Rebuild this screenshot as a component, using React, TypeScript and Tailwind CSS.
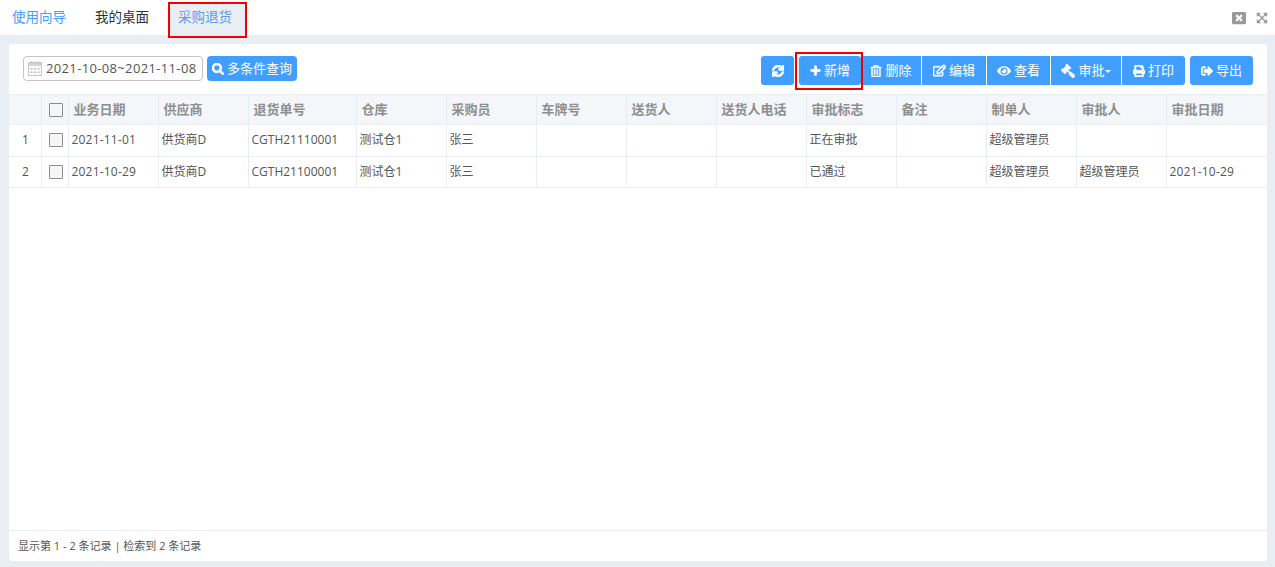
import React from "react";
import { FaSync, FaPlus, FaRegTrashAlt, FaRegEdit, FaEye, FaGavel, FaPrint, FaSignOutAlt, FaSearch, FaWindowClose, FaExpandArrowsAlt } from "react-icons/fa";

const widths = [32, 27, 90, 90, 108, 90, 90, 90, 90, 90, 90, 90, 90, 90, 101];
const heads = ["业务日期", "供应商", "退货单号", "仓库", "采购员", "车牌号", "送货人", "送货人电话", "审批标志", "备注", "制单人", "审批人", "审批日期"];
const rows = [
  ["1", "2021-11-01", "供货商D", "CGTH21110001", "测试仓1", "张三", "", "", "", "正在审批", "", "超级管理员", "", ""],
  ["2", "2021-10-29", "供货商D", "CGTH21100001", "测试仓1", "张三", "", "", "", "已通过", "", "超级管理员", "超级管理员", "2021-10-29"],
];

function Check() {
  return <span className="block w-[14px] h-[14px] border border-[#8a8a8a] bg-[#f5f5f5] ml-[7px] rounded-[1px]" />;
}

function CalendarIcon() {
  return (
    <svg width="16" height="17" viewBox="0 0 16 17" className="shrink-0" fill="none" stroke="#c8c8c8" strokeWidth="1">
      <rect x="1.5" y="2.5" width="13" height="13" fill="#fafafa" />
      <rect x="2" y="3" width="12" height="3" fill="#d4d4d4" stroke="none" />
      <path d="M4.5 1v3M8 1v3M11.5 1v3" />
      <path d="M3.5 8h2v1.5h-2zM7 8h2v1.5H7zM10.5 8h2v1.5h-2zM3.5 11.5h2V13h-2zM7 11.5h2V13H7zM10.5 11.5h2V13h-2z" fill="#bdbdbd" stroke="none" />
    </svg>
  );
}

function Btn({ icon, label, caret, className = "" }: { icon: React.ReactNode; label?: string; caret?: boolean; className?: string }) {
  return (
    <div className={`h-[29px] bg-[#409eff] text-white text-[13px] flex items-center justify-center gap-[3px] ${className}`}>
      {icon}
      {label && <span>{label}</span>}
      {caret && <span className="-ml-[3px] mt-[2px] w-0 h-0 border-x-[3px] border-x-transparent border-t-[3px] border-t-white" />}
    </div>
  );
}

export default function App() {
  return (
    <div className="w-[1275px] h-[567px] bg-[#e9edf4] flex flex-col overflow-hidden text-[12px] text-[#555]" style={{ fontFamily: '"Open Sans","Noto Sans CJK SC",sans-serif' }}>
      <div className="h-[35px] bg-white flex items-start text-[13.5px] shrink-0">
        <div className="w-[81px] pl-[12px] pt-[7px] text-[#409eff]">使用向导</div>
        <div className="w-[87px] pl-[14px] pt-[7px] text-[#303133]">我的桌面</div>
        <div className="w-[79px] h-[36px] mt-[2px] bg-[#e9edf4] border-2 border-[#f00000] text-[#5b9bf5] pl-[8px] pt-[3px] relative z-10">采购退货</div>
        <div className="ml-auto flex items-center gap-[10px] pr-[7px] pt-[11px] text-[#999]">
          <FaWindowClose size={14} />
          <FaExpandArrowsAlt size={12} />
        </div>
      </div>

      <div className="mt-[9px] ml-[9px] mr-[8px] h-[517px] bg-white rounded-[3px] flex flex-col">
        <div className="h-[50px] shrink-0 flex items-start pt-[12px] pl-[14px] pr-[14px]">
          <div className="w-[180px] h-[25px] border border-[#c4c4c4] rounded-[4px] flex items-center pl-[3px] gap-[3px] text-[13px] tracking-[0.35px] text-[#555]">
            <CalendarIcon />
            <span>2021-10-08~2021-11-08</span>
          </div>
          <div className="ml-[4px] w-[90px] h-[25px] bg-[#409eff] rounded-[4px] text-white text-[13px] flex items-center justify-center gap-[3px]">
            <FaSearch size={12} strokeWidth={30} />
            <span>多条件查询</span>
          </div>
          <div className="ml-auto flex items-start">
            <Btn icon={<FaSync size={12} strokeWidth={40} />} className="w-[33px] rounded-[3px] mr-[5px]" />
            <div className="relative flex">
              <Btn icon={<FaPlus size={11} strokeWidth={40} />} label="新增" className="w-[62px] rounded-[3px]" />
              <div className="absolute -left-[4px] -top-[4px] w-[68px] h-[38px] border-2 border-[#f00000]" />
            </div>
            <Btn icon={<FaRegTrashAlt size={12} strokeWidth={20} />} label="删除" className="w-[60px]" />
            <Btn icon={<FaRegEdit size={13} strokeWidth={25} />} label="编辑" className="w-[64px] ml-[1px]" />
            <Btn icon={<FaEye size={14} />} label="查看" className="w-[63px] ml-[1px]" />
            <Btn icon={<FaGavel size={14} strokeWidth={15} className="-scale-x-100" />} label="审批" caret className="w-[70px] ml-[1px]" />
            <Btn icon={<FaPrint size={12} strokeWidth={20} />} label="打印" className="w-[63px] ml-[1px] rounded-r-[3px]" />
            <Btn icon={<FaSignOutAlt size={12} strokeWidth={20} />} label="导出" className="w-[63px] ml-[5px] rounded-[3px]" />
          </div>
        </div>

        <div className="flex-1 min-h-0">
          <table className="table-fixed border-collapse w-[1258px]">
            <colgroup>
              {widths.map((w, i) => <col key={i} style={{ width: w }} />)}
            </colgroup>
            <thead>
              <tr className="h-[30px] bg-[#f5f6fa] border-y border-[#e9edf4]">
                <th className="border-r border-[#e9edf4]" />
                <th className="border-r border-[#e9edf4]"><Check /></th>
                {heads.map((h, i) => (
                  <th key={i} className="border-r border-[#e9edf4] last:border-r-0 text-left pl-[5px] text-[13px] font-bold text-[#8e8e8e]">{h}</th>
                ))}
              </tr>
            </thead>
            <tbody>
              {rows.map((r, ri) => (
                <tr key={ri} className="h-[31.5px] border-b border-[#e9edf4]">
                  <td className="border-r border-[#e9edf4] pl-[13px]">{r[0]}</td>
                  <td className="border-r border-[#e9edf4]"><Check /></td>
                  {r.slice(1).map((c, i) => (
                    <td key={i} className={`border-r border-[#e9edf4] last:border-r-0 pl-[3px] ${c.startsWith("2021") ? "tracking-[0.2px]" : ""}`}>{c}</td>
                  ))}
                </tr>
              ))}
            </tbody>
          </table>
        </div>

        <div className="h-[31px] shrink-0 border-t border-[#e9edf4] flex items-center pl-[9px] text-[11px] text-[#555]">
          显示第 1 - 2 条记录 | 检索到 2 条记录
        </div>
      </div>
    </div>
  );
}
